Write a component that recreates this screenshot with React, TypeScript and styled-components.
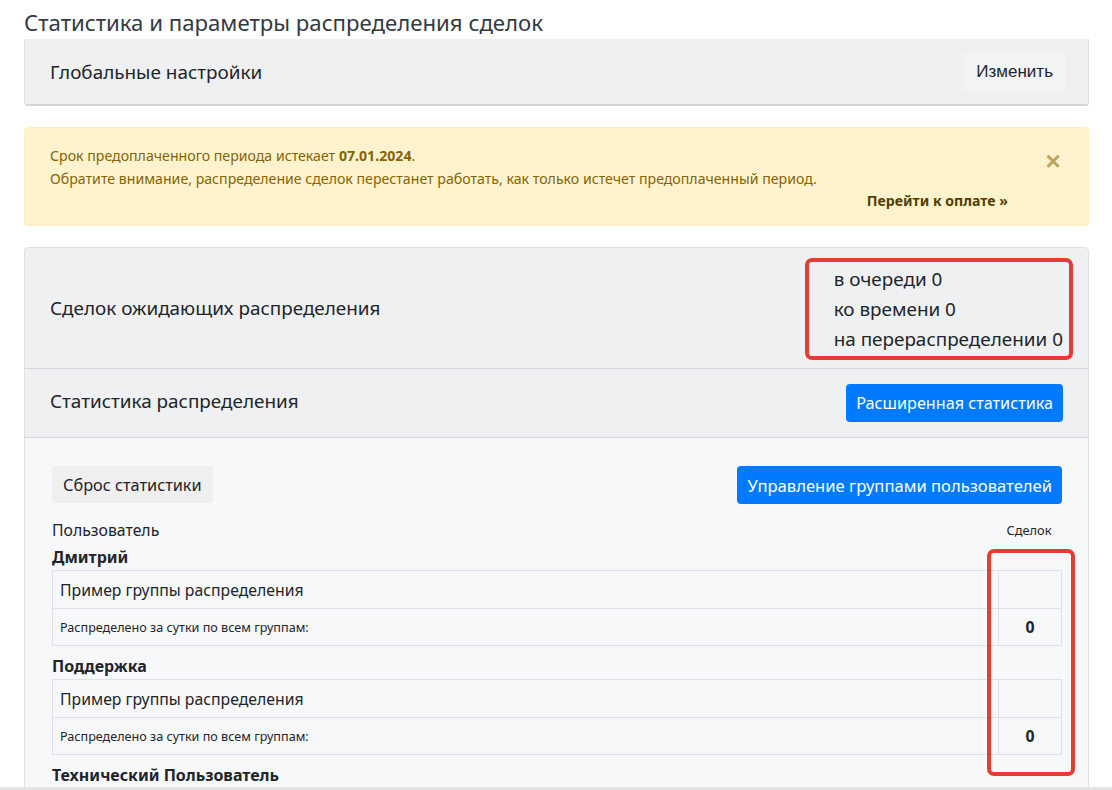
import React from 'react';
import styled, { createGlobalStyle } from 'styled-components';

const GlobalStyle = createGlobalStyle`
  html, body {
    margin: 0;
    padding: 0;
    background: #fff;
  }
  body {
    font-family: 'Noto Sans', 'Open Sans', sans-serif;
    color: #212529;
  }
  * { box-sizing: border-box; }
`;

const Viewport = styled.div`
  height: 790px;
  overflow: hidden;
  border-bottom: 3px solid #e3e4e6;
`;

const Page = styled.div`
  padding: 0 23px 0 24px;
`;

const Title = styled.h1`
  margin: 0;
  padding-top: 8px;
  height: 39px;
  font-size: 22.2px;
  font-weight: 400;
  line-height: 30px;
  color: #343a40;
`;

const Card = styled.div`
  background: #eff0f2;
  border: 1px solid #dfe0e3;
  border-radius: 4px;
  margin-bottom: 21px;
`;

const SettingsCard = styled(Card)`
  height: 67px;
  border-top: none;
  border-radius: 0 0 4px 4px;
  border-bottom: 2px solid #d4d5d8;
  display: flex;
  align-items: center;
  justify-content: space-between;
  padding: 0 22px 0 25px;
`;

const HeaderText = styled.div<{ $raise?: boolean }>`
  font-size: 18.9px;
  line-height: 26px;
  margin-top: ${(p) => (p.$raise ? '-5px' : '0')};
`;

const PlainButton = styled.button`
  border: none;
  background: #f2f3f5;
  border-radius: 4px;
  height: 40px;
  padding: 0 13px;
  font-family: 'Liberation Sans', Arial, sans-serif;
  font-size: 17px;
  color: #212529;
`;

const Alert = styled.div`
  display: flex;
  background: #fff3cd;
  border: 1px solid #ffeeba;
  border-radius: 4px;
  color: #856404;
  height: 99px;
  padding: 16px 0 0 25px;
  margin-bottom: 21px;
  font-size: 14.15px;
  line-height: 23px;
`;

const AlertBody = styled.div`
  flex: 1;
  display: flex;
  flex-direction: column;
`;

const PayLink = styled.a`
  align-self: flex-end;
  font-weight: 700;
  color: #533f03;
  text-decoration: none;
  margin-top: -1px;
`;

const Close = styled.button`
  width: 80px;
  align-self: flex-start;
  border: none;
  background: none;
  padding: 0 0 0 10px;
  margin-top: 7px;
  color: #856404;
  opacity: 0.55;
  font-family: 'Liberation Sans', Arial, sans-serif;
  font-size: 26px;
  font-weight: 700;
  line-height: 20px;
`;

const StatsCard = styled(Card)`
  margin-bottom: 0;
  border-radius: 4px 4px 0 0;
`;

const Section = styled.div<{ $h: number }>`
  height: ${(p) => p.$h}px;
  display: flex;
  align-items: center;
  justify-content: space-between;
  padding: 0 25px;
  & + & {
    border-top: 1px solid #d6d7da;
  }
`;

const Queue = styled.div`
  position: relative;
  font-size: 18.9px;
  line-height: 30px;
  margin-top: 2px;
`;

const Annotation = styled.div`
  position: absolute;
  border: 4px solid #e33e33;
  border-radius: 7px;
  pointer-events: none;
`;

const PrimaryButton = styled.button<{ $size?: number }>`
  border: none;
  border-radius: 4px;
  background: #007bff;
  color: #fff;
  height: 38px;
  padding: 0 10px;
  font-family: 'Noto Sans', 'Open Sans', sans-serif;
  font-size: ${(p) => p.$size ?? 16.6}px;
`;

const Body = styled.div`
  position: relative;
  border-top: 1px solid #d6d7da;
  background: #f7f8fa;
  padding: 28px 26px 0 27px;
`;

const Toolbar = styled.div`
  display: flex;
  justify-content: space-between;
  margin-bottom: 14px;
`;

const ResetButton = styled.button`
  border: none;
  border-radius: 4px;
  background: #efefef;
  color: #212529;
  height: 37px;
  padding: 0 11px;
  font-family: 'Noto Sans', 'Open Sans', sans-serif;
  font-size: 16.3px;
`;

const ListHead = styled.div`
  display: grid;
  grid-template-columns: 1fr 63px;
  align-items: center;
  height: 24px;
  margin-bottom: 3px;
  font-size: 15.8px;
`;

const CountHead = styled.span`
  font-size: 12.8px;
  text-align: center;
  padding-right: 3px;
`;

const UserName = styled.div`
  font-size: 16px;
  font-weight: 700;
  line-height: 24px;
  padding-bottom: 1px;
`;

const Table = styled.div`
  display: grid;
  grid-template-columns: 1fr 63px;
  border: 1px solid #dee2e6;
  margin-bottom: 8px;
`;

const Cell = styled.div<{ $small?: boolean; $count?: boolean }>`
  height: 37px;
  display: flex;
  align-items: center;
  justify-content: ${(p) => (p.$count ? 'center' : 'flex-start')};
  padding: ${(p) => (p.$count ? '0' : '0 7px')};
  font-size: ${(p) => (p.$small ? '12.6px' : '15.8px')};
  font-weight: ${(p) => (p.$count ? 700 : 400)};
  border-left: ${(p) => (p.$count ? '1px solid #dee2e6' : 'none')};
  &:nth-child(n + 3) {
    border-top: 1px solid #dee2e6;
  }
`;

const users = ['Дмитрий', 'Поддержка', 'Технический Пользователь'];

function UserBlock({ name }: { name: string }) {
  return (
    <>
      <UserName>{name}</UserName>
      <Table>
        <Cell>Пример группы распределения</Cell>
        <Cell $count />
        <Cell $small>Распределено за сутки по всем группам:</Cell>
        <Cell $count>0</Cell>
      </Table>
    </>
  );
}

export default function App() {
  return (
    <Viewport>
      <GlobalStyle />
      <Page>
        <Title>Статистика и параметры распределения сделок</Title>

        <SettingsCard>
          <HeaderText>Глобальные настройки</HeaderText>
          <PlainButton>Изменить</PlainButton>
        </SettingsCard>

        <Alert>
          <AlertBody>
            <span>
              Срок предоплаченного периода истекает <b>07.01.2024</b>.
            </span>
            <span>
              Обратите внимание, распределение сделок перестанет работать, как только истечет
              предоплаченный период.
            </span>
            <PayLink href='#'>Перейти к оплате »</PayLink>
          </AlertBody>
          <Close>×</Close>
        </Alert>

        <StatsCard>
          <Section $h={120}>
            <HeaderText>Сделок ожидающих распределения</HeaderText>
            <Queue>
              <div>в очереди 0</div>
              <div>ко времени 0</div>
              <div>на перераспределении 0</div>
              <Annotation style={{ top: -6, left: -29, right: -10, bottom: -6 }} />
            </Queue>
          </Section>
          <Section $h={69}>
            <HeaderText $raise>Статистика распределения</HeaderText>
            <PrimaryButton $size={16.2}>Расширенная статистика</PrimaryButton>
          </Section>
          <Body>
            <Toolbar>
              <ResetButton>Сброс статистики</ResetButton>
              <PrimaryButton>Управление группами пользователей</PrimaryButton>
            </Toolbar>
            <ListHead>
              <span>Пользователь</span>
              <CountHead>Сделок</CountHead>
            </ListHead>
            {users.map((u) => (
              <UserBlock key={u} name={u} />
            ))}
            <Annotation style={{ top: 111, right: 13, width: 88, height: 227 }} />
          </Body>
        </StatsCard>
      </Page>
    </Viewport>
  );
}
